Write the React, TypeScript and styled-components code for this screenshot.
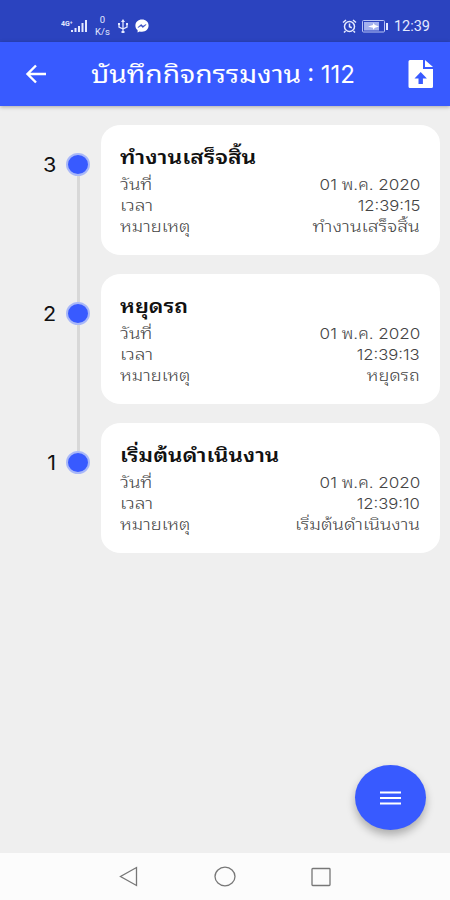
import React from 'react';
import styled, { createGlobalStyle } from 'styled-components';

const GlobalStyle = createGlobalStyle`
  * { box-sizing: border-box; }
  body { margin: 0; background: #efefef; }
`;

const Screen = styled.div`
  width: 450px;
  height: 900px;
  display: flex;
  flex-direction: column;
  overflow: hidden;
  background: #efefef;
  color: #111;
  font-family: Inter, 'Noto Sans Thai Looped', 'Noto Sans Thai', 'Noto Sans', sans-serif;
`;

const StatusBar = styled.header`
  height: 42px;
  flex: none;
  display: flex;
  align-items: center;
  justify-content: space-between;
  padding: 10px 20px 0 61px;
  background: #2b43bf;
  color: #e4e9ff;
`;

const StatusGroup = styled.div<{ $gap: number }>`
  display: flex;
  align-items: center;
  gap: ${(p) => p.$gap}px;
`;

const NetSpeed = styled.div`
  width: 17px;
  display: flex;
  flex-direction: column;
  align-items: center;
  font: 400 9.5px/12px Roboto, sans-serif;
`;

const Clock = styled.span`
  padding-top: 2px;
  font: 400 14.5px/18px Roboto, sans-serif;
`;

const AppBar = styled.nav`
  height: 64px;
  flex: none;
  display: flex;
  align-items: center;
  padding: 0 16px 0 24px;
  background: #385aff;
  color: #fff;
  box-shadow: 0 1px 4px rgba(0, 0, 0, 0.3);
`;

const BarTitle = styled.h1`
  flex: 1;
  display: flex;
  justify-content: space-between;
  margin: 2px 53px 0 43px;
  font-size: 24px;
  line-height: 40px;
  font-weight: 400;
  white-space: nowrap;
`;

const Wide = styled.span<{ $scale: number; $right?: boolean }>`
  display: inline-block;
  transform: scaleX(${(p) => p.$scale});
  transform-origin: ${(p) => (p.$right ? 'right' : 'left')} center;
`;

const IconButton = styled.button`
  display: flex;
  padding: 0;
  border: 0;
  background: none;
  color: inherit;
`;

const Timeline = styled.main`
  flex: 1;
  display: flex;
  flex-direction: column;
  gap: 19px;
  padding: 19px 10px 0 0;
`;

const Entry = styled.section`
  height: 130px;
  display: grid;
  grid-template-columns: 56px 44px 1fr;
  grid-template-rows: 130px;
`;

const Step = styled.span`
  padding-top: 26px;
  text-align: right;
  font-size: 20px;
  line-height: 28px;
`;

const Rail = styled.div`
  display: flex;
  flex-direction: column;
  align-items: center;
  padding-top: 28px;
`;

const Dot = styled.i`
  width: 24px;
  height: 23px;
  flex: none;
  border: 2px solid #a9b8f8;
  border-radius: 50%;
  background: #385aff;
`;

const Connector = styled.i`
  width: 3px;
  height: 126px;
  flex: none;
  background: #d8d8d8;
`;

const Card = styled.article`
  margin-left: 1px;
  padding: 17px 20px 0 19px;
  border-radius: 20px / 18px;
  background: #fff;
`;

const CardTitle = styled.h2`
  margin: 0;
  font-size: 18.5px;
  line-height: 30px;
  margin-bottom: 3px;
  font-weight: 600;
  white-space: nowrap;
`;

const Row = styled.div`
  height: 20.7px;
  display: flex;
  justify-content: space-between;
  align-items: center;
  font-size: 15px;
  line-height: 20px;
  font-weight: 300;
  color: #444;
  white-space: nowrap;
`;

const Fab = styled.button`
  position: absolute;
  left: 355px;
  top: 765px;
  width: 71px;
  height: 65px;
  display: flex;
  align-items: center;
  justify-content: center;
  padding: 0;
  border: 0;
  border-radius: 50%;
  background: #385aff;
  box-shadow: 0 5px 9px rgba(0, 0, 0, 0.28);
`;

const NavBar = styled.footer`
  height: 47px;
  flex: none;
  display: flex;
  align-items: center;
  justify-content: center;
  gap: 75px;
  background: #fcfcfc;
`;

const entries = [
  { step: 3, title: 'ทำงานเสร็จสิ้น', time: '12:39:15', titleScale: 1.24, noteScale: 1.28 },
  { step: 2, title: 'หยุดรถ', time: '12:39:13', titleScale: 1.19, noteScale: 1.21 },
  { step: 1, title: 'เริ่มต้นดำเนินงาน', time: '12:39:10', titleScale: 1.215, noteScale: 1.25 },
];

export default function App() {
  return (
    <Screen>
      <GlobalStyle />
      <StatusBar>
        <StatusGroup $gap={6}>
          <svg width="27" height="14" viewBox="0 0 27 14" fill="currentColor">
            <text x="0" y="7" fontSize="7" fontWeight="700" fontFamily="Roboto">4G⁺</text>
            <path d="M10 11h2v2h-2zM13.500 9h2v4h-2zM17 7h2v6h-2zM20.500 4h2v9h-2zM24 1h2v12h-2z" />
          </svg>
          <NetSpeed><span>0</span><span>K/s</span></NetSpeed>
          <svg width="12" height="15" viewBox="0 0 12 15" fill="none" stroke="currentColor" strokeWidth="1.300">
            <path d="M6 2v11M2 5v3l4 2M10 5v3l-4 2" />
            <path d="m6 0 2 3H4zM4.500 12h3v2h-3zM1 4h2v2H1zM9 4h2v2H9z" fill="currentColor" stroke="none" />
          </svg>
          <svg width="14" height="14" viewBox="0 0 14 14">
            <path d="M7 .5C3.200.5.400 3 .400 6.500c0 2 .8 3.500 2.200 4.600v2.400l2-1.100c.8.200 1.500.3 2.400.3 3.800 0 6.600-2.600 6.600-6.200S10.800.5 7 .5z" fill="#fff" />
            <path d="m3 8.500 3-3 2 1.700 3-1.700-3 3-2-1.700z" fill="#2b43bf" stroke="#2b43bf" strokeWidth=".6" />
          </svg>
        </StatusGroup>
        <StatusGroup $gap={5}>
          <svg width="15" height="14" viewBox="0 0 15 14" fill="none" stroke="currentColor" strokeWidth="1.500">
            <circle cx="7.500" cy="7.500" r="5" />
            <path d="M1 3.500 4 1M14 3.500 11 1M7.500 4.500v3.300l2.300 1M3.500 12 2 13.500M11.500 12l1.500 1.500" />
          </svg>
          <svg width="27" height="13" viewBox="0 0 27 13">
            <rect x=".5" y=".5" width="22" height="11.500" rx="1" fill="none" stroke="#b8c4f5" />
            <path d="M2 2h15v8.500H2z" fill="#a4b2ee" />
            <path d="M6 6.500 11 5V3l2 2 4 1.500-4 1.200-2 2v-2z" fill="#fff" />
            <path d="M24 3h2v7h-2z" fill="#e4e9ff" />
          </svg>
          <Clock>12:39</Clock>
        </StatusGroup>
      </StatusBar>
      <AppBar>
        <IconButton aria-label="back">
          <svg width="24" height="22" viewBox="0 0 24 22" fill="none" stroke="currentColor" strokeWidth="2.400">
            <path d="M22 11H3.500M12 2.500 3.500 11l8.500 8.500" />
          </svg>
        </IconButton>
        <BarTitle>
          <Wide $scale={1.175}>บันทึกกิจกรรมงาน</Wide>
          <span>: 112</span>
        </BarTitle>
        <IconButton aria-label="upload">
          <svg width="26" height="30" viewBox="0 0 26 30" fill="currentColor">
            <path fillRule="evenodd" d="M2 1h13v9h10v17.500q0 1.500-1.500 1.500H2q-1.500 0-1.500-1.500v-25Q.5 1 2 1zM12.700 13l-6.200 6.500h4V25h4.400v-5.500h4z" />
            <path d="M17 1v7h8z" />
          </svg>
        </IconButton>
      </AppBar>
      <Timeline>
        {entries.map((e, i) => (
          <Entry key={e.step}>
            <Step><Wide $right $scale={1.08}>{e.step}</Wide></Step>
            <Rail>
              <Dot />
              {i < entries.length - 1 && <Connector />}
            </Rail>
            <Card>
              <CardTitle><Wide $scale={e.titleScale}>{e.title}</Wide></CardTitle>
              <Row><Wide $scale={1.26}>วันที่</Wide><Wide $right $scale={1.14}>01 พ.ค. 2020</Wide></Row>
              <Row><Wide $scale={1.28}>เวลา</Wide><Wide $right $scale={1.11}>{e.time}</Wide></Row>
              <Row><Wide $scale={1.22}>หมายเหตุ</Wide><Wide $right $scale={e.noteScale}>{e.title}</Wide></Row>
            </Card>
          </Entry>
        ))}
      </Timeline>
      <Fab aria-label="menu">
        <svg width="22" height="16" viewBox="0 0 22 16" stroke="#fff" strokeWidth="2">
          <path d="M0 2.500h21M0 8h21M0 13.500h21" />
        </svg>
      </Fab>
      <NavBar>
        <svg width="20" height="21" viewBox="0 0 20 21" fill="none" stroke="#777" strokeWidth="1.300"><path d="M17.500 1.500v18L1.500 10.500z" /></svg>
        <svg width="22" height="21" viewBox="0 0 22 21" fill="none" stroke="#777" strokeWidth="1.300"><ellipse cx="11" cy="10.500" rx="10" ry="9.300" /></svg>
        <svg width="20" height="20" viewBox="0 0 20 20" fill="none" stroke="#777" strokeWidth="1.300"><rect x="1" y="1.500" width="18" height="17" rx=".8" /></svg>
      </NavBar>
    </Screen>
  );
}
